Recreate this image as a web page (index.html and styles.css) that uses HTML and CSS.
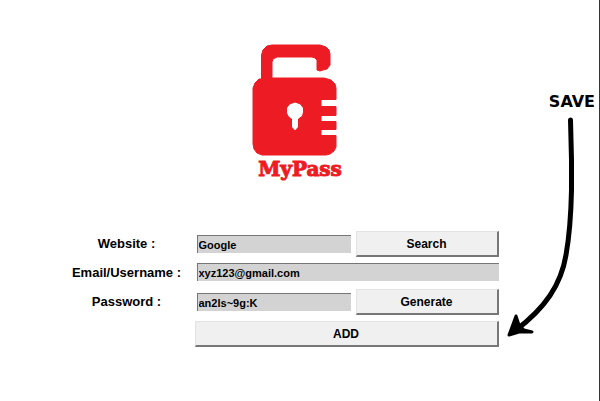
FILE: index.html
```html
<!DOCTYPE html>
<html lang="en">
<head>
<meta charset="utf-8">
<title>MyPass</title>
<link rel="stylesheet" href="styles.css">
</head>
<body>
<main class="window">
  <header class="brand">
    <svg class="logo" viewBox="246 37 108 150" role="img" aria-label="MyPass">
      <path class="lock" fill-rule="evenodd" d="M261.500 79V55L263 50L267 46L272 45H320L326 47L329 50L330 54V65L327 69L323 70L320 71L317 70V60L315 58L312 57H277L273 59L272 62V78H324L331 80L335 84L336 88V99.500H321V106.500H336V115.500H321V121.500H336V129.500H321V135.500H336V147L334 151L330 154L326 155H262L257 153L254 149L253 144V88L255 83L259 79ZM295 102L289.500 104L286.500 108V113L288.500 117L291.500 119V127L295 131L298.500 127V119L302.500 116L303.500 112V108L300.500 104Z"/>
      <text class="wordmark" x="300" y="176" text-anchor="middle">MyPass</text>
    </svg>
  </header>
  <form class="form">
    <label class="label" for="website">Website :</label>
    <input class="field" id="website" type="text" value="Google">
    <button class="button" type="button">Search</button>
    <label class="label" for="email">Email/Username :</label>
    <input class="field field-wide" id="email" type="text" value="xyz123@gmail.com">
    <label class="label" for="password">Password :</label>
    <input class="field" id="password" type="text" value="an2ls~9g:K">
    <button class="button" type="button">Generate</button>
    <button class="button button-add" type="button">ADD</button>
  </form>
  <div class="note">
    <span class="note-text">SAVE</span>
    <svg class="arrow" viewBox="499 112 96 232" aria-hidden="true">
      <path class="arrow-line" d="M570.500 120L571.500 160V190C571 215 569 238 566 255C561 285 545 308 516 330"/>
      <path class="arrow-head" d="M509 335L516 316L519 325L524 330L532 332L519 332Z"/>
    </svg>
  </div>
</main>
</body>
</html>
```
FILE: styles.css
```css
* {
  box-sizing: border-box;
}

body {
  margin: 0;
  background: #fff;
  color: #000;
  font-family: "Liberation Sans", Arial, sans-serif;
}

.window {
  position: relative;
  min-height: 100vh;
  padding-top: 37px;
  border-right: 1px solid #333638;
}

.brand {
  display: flex;
  justify-content: center;
  margin-bottom: 44px;
}

.logo {
  width: 108px;
  height: 150px;
}

.lock {
  fill: #ed1c24;
  stroke: #ed1c24;
  stroke-width: 1;
  stroke-linejoin: round;
}

.wordmark {
  fill: #ed1c24;
  stroke: #ed1c24;
  stroke-width: 1;
  font: bold 20px "DejaVu Serif", serif;
}

.form {
  display: grid;
  grid-template-columns: 136px 161px 143px;
  grid-template-rows: 26px 20px 26px 26px;
  row-gap: 6px;
  justify-content: center;
  align-items: center;
  padding-right: 42px;
}

.label {
  font-size: 13px;
  font-weight: bold;
  line-height: 16px;
  text-align: center;
}

.field {
  width: 154px;
  height: 18px;
  margin: 0 0 0 2px;
  padding: 0 1px;
  border: 0 solid #767676;
  border-width: 1px 0 0 1px;
  border-radius: 0;
  background: #d3d3d3;
  color: #000;
  font: bold 11px "Liberation Sans", Arial, sans-serif;
}

.field-wide {
  grid-column: 2 / 4;
  width: auto;
  align-self: start;
}

.button {
  height: 26px;
  padding: 0;
  border: 1px solid #e3e3e3;
  border-right: 2px solid #777;
  border-bottom: 2px solid #777;
  background: #f0f0f0;
  color: #000;
  font: bold 12px "Liberation Sans", Arial, sans-serif;
}

.button-add {
  grid-column: 2 / 4;
}

/* Callout drawn over the window, pointing at the ADD button */
.note {
  position: absolute;
  top: 92px;
  right: 4px;
  display: flex;
  flex-direction: column;
  align-items: flex-end;
}

.note-text {
  font: bold 16px/20px "DejaVu Sans", sans-serif;
}

.arrow {
  width: 96px;
  height: 232px;
}

.arrow-line {
  fill: none;
  stroke: #000;
  stroke-width: 5;
  stroke-linecap: round;
}

.arrow-head {
  stroke: #000;
  stroke-width: 3;
  stroke-linejoin: round;
}
```
